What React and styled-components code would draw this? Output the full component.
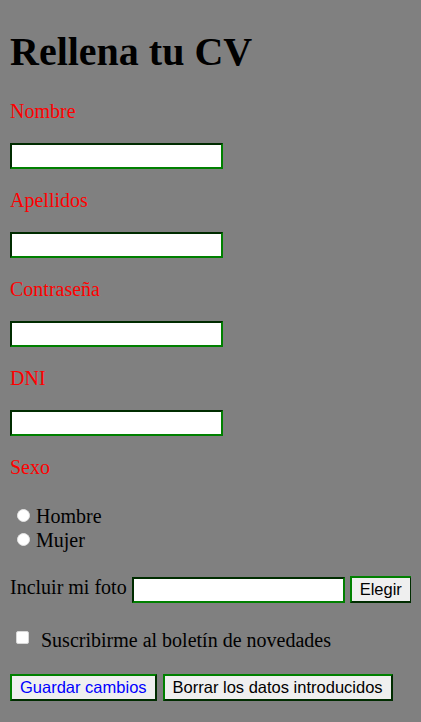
import React from "react";
import styled, { createGlobalStyle } from "styled-components";

const GlobalStyle = createGlobalStyle`
  body {
    margin: 10px;
    background-color: #808080;
    font-family: "Liberation Serif", "Times New Roman", serif;
    font-size: 20px;
    color: #000;
  }
`;

const Title = styled.h1`
  font-size: 40px;
  font-weight: bold;
  margin: 17.8px 0 24.8px;
`;

const FieldLabel = styled.p`
  color: red;
  margin: 20px 0;
`;

const Field = styled.div`
  margin: 20px 0;
`;

const TextInput = styled.input`
  display: block;
  flex-shrink: 0;
  box-sizing: border-box;
  width: 213px;
  height: 26px;
  margin: 0;
  padding: 1px 2px;
  border: 2px inset green;
  background: #fff;
  font-family: "Liberation Sans", Arial, sans-serif;
  font-size: 16px;
`;

const RadioGroup = styled.div`
  margin: 25px 0 0;
  padding-left: 2px;
`;

const Option = styled.label`
  display: flex;
  align-items: center;
  line-height: 24px;
  height: 24px;
`;

const Radio = styled.input`
  appearance: none;
  width: 13px;
  height: 13px;
  margin: 0 6px 0 5px;
  border-radius: 50%;
  background: #fff;
  border: 1px solid #e4e4e4;
  box-sizing: border-box;
  position: relative;
  top: 0;
`;

const PhotoRow = styled.div`
  display: flex;
  align-items: flex-start;
  gap: 5px;
  margin-top: 24.5px;
  height: 27px;
  white-space: nowrap;

  ${TextInput} {
    align-self: flex-end;
  }
`;

const PhotoLabel = styled.span`
  flex-shrink: 0;
`;

const Button = styled.button`
  flex-shrink: 0;
  box-sizing: border-box;
  height: 27px;
  padding: 0 8px;
  margin: 0;
  border: 2px outset green;
  background: #efefef;
  font-family: "Liberation Sans", Arial, sans-serif;
  font-size: 16.5px;
  white-space: nowrap;
  color: ${(p) => p.$color || "#000"};
`;

const CheckRow = styled.label`
  display: flex;
  align-items: center;
  height: 23px;
  margin-top: 26px;
  padding-left: 6px;
`;

const Check = styled.input`
  appearance: none;
  width: 13px;
  height: 13px;
  margin: 0 12px 0 0;
  border-radius: 2px;
  background: #fff;
  border: 1px solid #d8d8d8;
  box-sizing: border-box;
  position: relative;
  top: -3px;
`;

const Actions = styled.div`
  display: flex;
  gap: 6px;
  margin-top: 22px;
`;

const fields = ["Nombre", "Apellidos", "Contraseña", "DNI"];

export default function App() {
  return (
    <>
      <GlobalStyle />
      <form onSubmit={(ev) => ev.preventDefault()}>
        <Title>Rellena tu CV</Title>
        {fields.map((name) => (
          <React.Fragment key={name}>
            <FieldLabel>{name}</FieldLabel>
            <Field>
              <TextInput type={name === "Contraseña" ? "password" : "text"} />
            </Field>
          </React.Fragment>
        ))}
        <FieldLabel>Sexo</FieldLabel>
        <RadioGroup>
          <Option>
            <Radio type="radio" name="sexo" />
            Hombre
          </Option>
          <Option>
            <Radio type="radio" name="sexo" />
            Mujer
          </Option>
        </RadioGroup>
        <PhotoRow>
          <PhotoLabel>Incluir mi foto</PhotoLabel>
          <TextInput type="text" />
          <Button type="button">Elegir</Button>
        </PhotoRow>
        <CheckRow>
          <Check type="checkbox" />
          Suscribirme al boletín de novedades
        </CheckRow>
        <Actions>
          <Button type="submit" $color="blue">
            Guardar cambios
          </Button>
          <Button type="reset">Borrar los datos introducidos</Button>
        </Actions>
      </form>
    </>
  );
}
